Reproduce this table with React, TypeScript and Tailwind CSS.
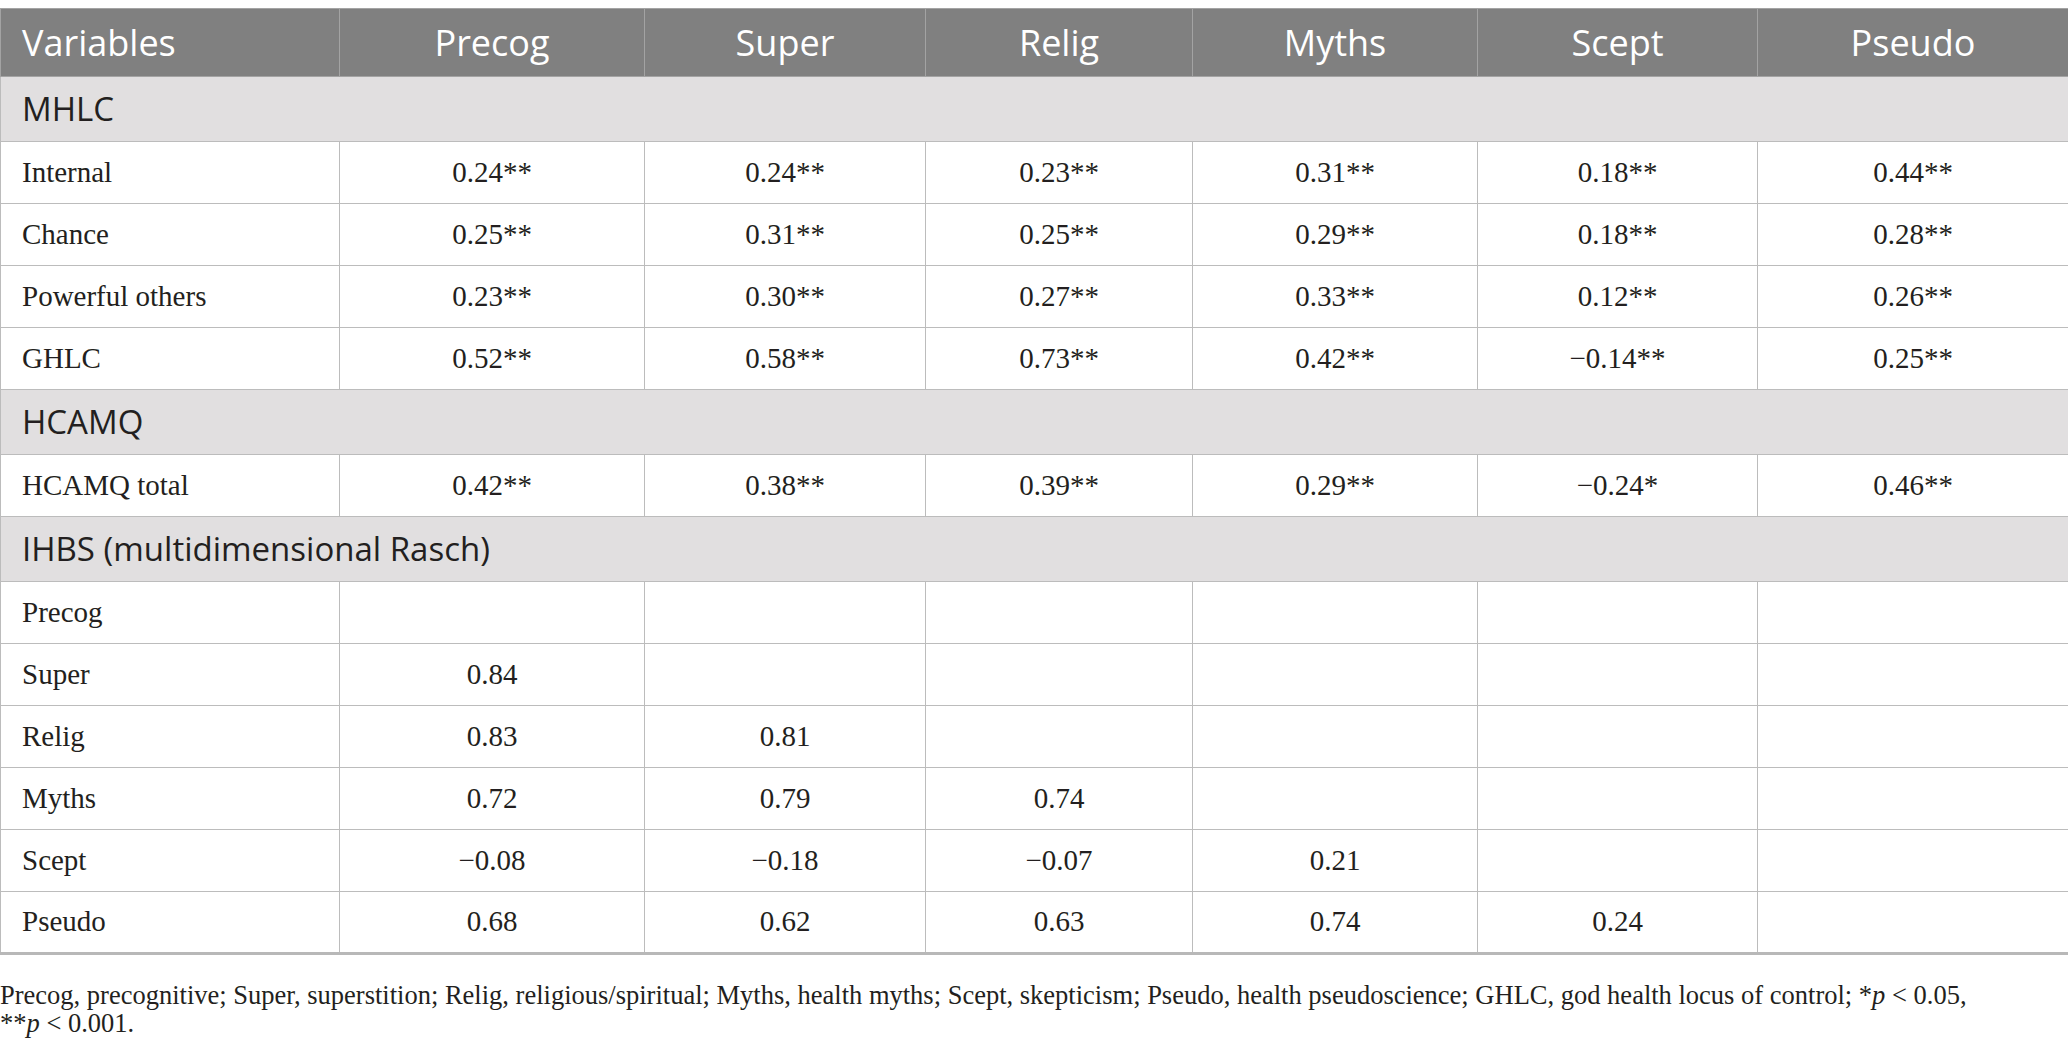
import React from 'react';

type Row = { label: string; values: string[] };

const columns = ['Precog', 'Super', 'Relig', 'Myths', 'Scept', 'Pseudo'];

const sections: { title: string; rows: Row[] }[] = [
  {
    title: 'MHLC',
    rows: [
      { label: 'Internal', values: ['0.24**', '0.24**', '0.23**', '0.31**', '0.18**', '0.44**'] },
      { label: 'Chance', values: ['0.25**', '0.31**', '0.25**', '0.29**', '0.18**', '0.28**'] },
      { label: 'Powerful others', values: ['0.23**', '0.30**', '0.27**', '0.33**', '0.12**', '0.26**'] },
      { label: 'GHLC', values: ['0.52**', '0.58**', '0.73**', '0.42**', '\u22120.14**', '0.25**'] },
    ],
  },
  {
    title: 'HCAMQ',
    rows: [{ label: 'HCAMQ total', values: ['0.42**', '0.38**', '0.39**', '0.29**', '\u22120.24*', '0.46**'] }],
  },
  {
    title: 'IHBS (multidimensional Rasch)',
    rows: [
      { label: 'Precog', values: ['', '', '', '', '', ''] },
      { label: 'Super', values: ['0.84', '', '', '', '', ''] },
      { label: 'Relig', values: ['0.83', '0.81', '', '', '', ''] },
      { label: 'Myths', values: ['0.72', '0.79', '0.74', '', '', ''] },
      { label: 'Scept', values: ['\u22120.08', '\u22120.18', '\u22120.07', '0.21', '', ''] },
      { label: 'Pseudo', values: ['0.68', '0.62', '0.63', '0.74', '0.24', ''] },
    ],
  },
];

const sans = "font-['Open_Sans',sans-serif]";
const serif = "font-['Liberation_Serif',serif]";

export default function App() {
  return (
    <div className="w-[2068px] h-[1048px] bg-white overflow-hidden text-[#231f20]">
      <table className="mt-2 w-[2068px] table-fixed border-collapse border-b-[3px] border-b-[#b8b8b8]">
        <colgroup>
          <col className="w-[339px]" />
          <col className="w-[305px]" />
          <col className="w-[281px]" />
          <col className="w-[267px]" />
          <col className="w-[285px]" />
          <col className="w-[280px]" />
          <col className="w-[311px]" />
        </colgroup>
        <thead>
          <tr className="h-[68px] bg-[#808080] text-white">
            <th className={`${sans} border border-[#a3a3a3] pl-[21px] text-left text-[36px] font-normal`}>Variables</th>
            {columns.map((c) => (
              <th key={c} className={`${sans} border border-[#a3a3a3] text-center text-[36px] font-normal`}>
                {c}
              </th>
            ))}
          </tr>
        </thead>
        <tbody>
          {sections.map((s) => (
            <React.Fragment key={s.title}>
              <tr className="h-[65px] bg-[#e1dfe0]">
                <td colSpan={7} className={`${sans} border border-[#bcbcbc] pl-[21px] text-[33px]`}>
                  {s.title}
                </td>
              </tr>
              {s.rows.map((r) => (
                <tr key={s.title + r.label} className="h-[62px]">
                  <td className={`${serif} border border-[#bcbcbc] pl-[21px] text-[29px]`}>{r.label}</td>
                  {r.values.map((v, i) => (
                    <td key={i} className={`${serif} border border-[#bcbcbc] text-center text-[29px]`}>
                      {v}
                    </td>
                  ))}
                </tr>
              ))}
            </React.Fragment>
          ))}
        </tbody>
      </table>
      <p className={`${serif} mt-[26px] text-[26.5px] leading-[28px]`}>
        <span className="whitespace-nowrap">
          Precog, precognitive; Super, superstition; Relig, religious/spiritual; Myths, health myths; Scept, skepticism;
          Pseudo, health pseudoscience; GHLC, god health locus of control; *<i>p</i> &lt; 0.05,
        </span>
        <br />
        **<i>p</i> &lt; 0.001.
      </p>
    </div>
  );
}
